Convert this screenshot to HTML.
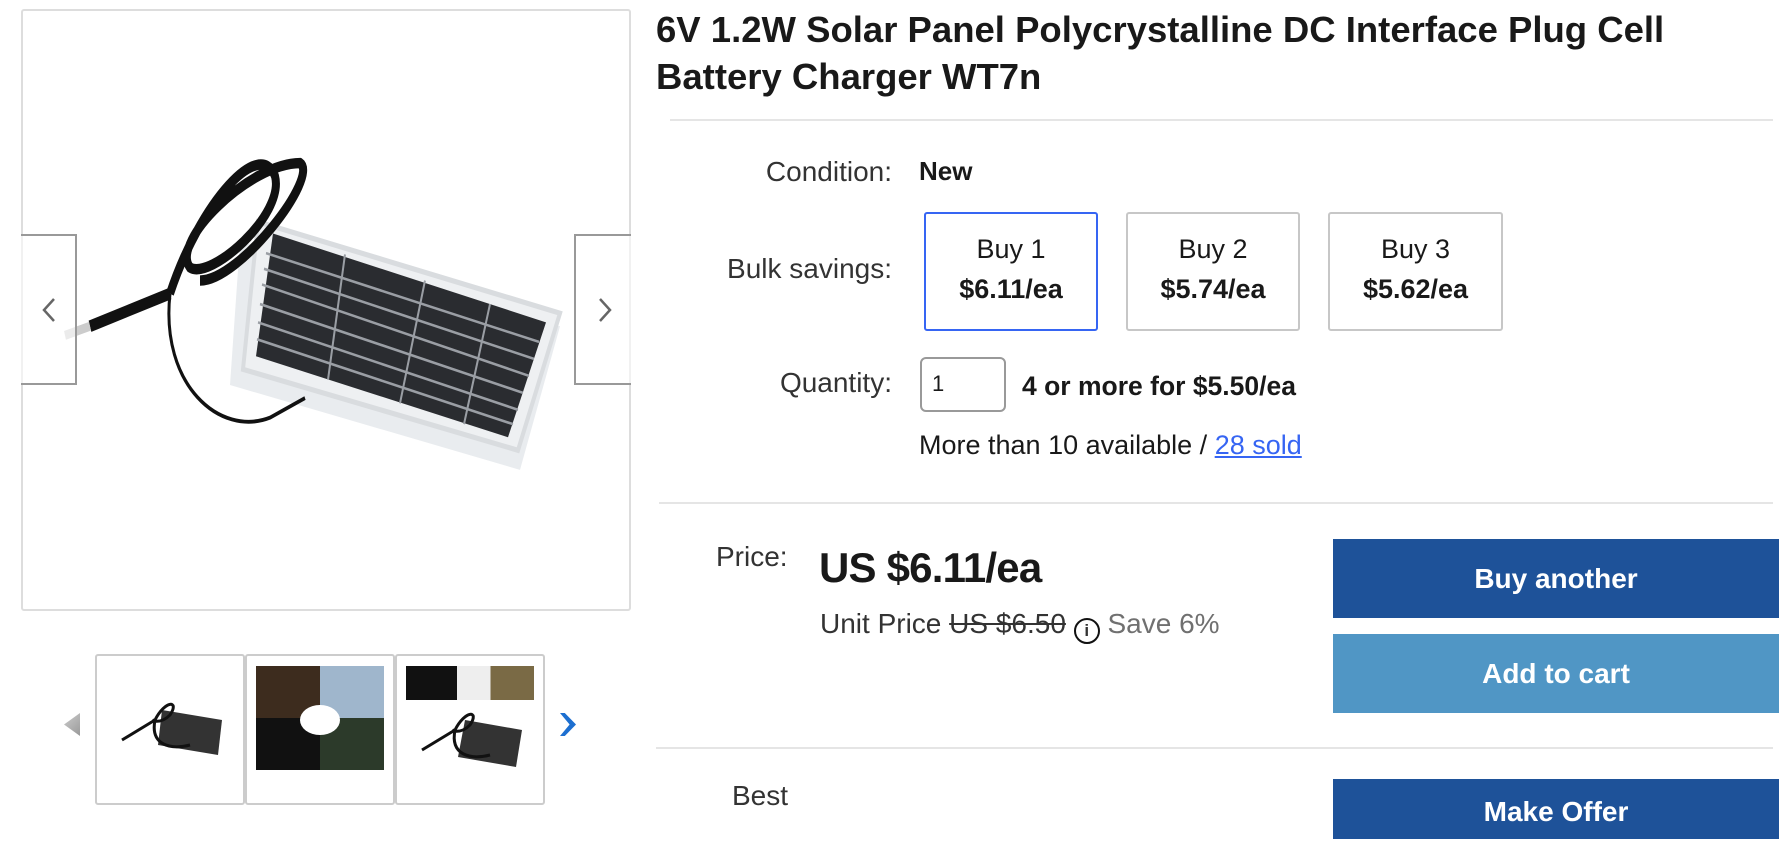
<!DOCTYPE html>
<html><head><meta charset="utf-8"><style>
*{margin:0;padding:0;box-sizing:border-box}
body{width:1790px;height:822px;overflow:hidden;background:#fff;font-family:"Liberation Sans",Arial,sans-serif;color:#191919;position:relative}
.a{position:absolute;white-space:nowrap}
.box{position:absolute;border:1px solid #c7c7c7;border-radius:3px;background:#fff}
.bulk{position:absolute;border:2px solid #c7c7c7;border-radius:3px;text-align:center;font-size:27px;color:#191919}
.bulk.sel{border-color:#3665f3}
.bulk div{position:absolute;left:0;right:0}
.btn{position:absolute;left:1333px;width:446px;color:#fff;font-weight:bold;font-size:28px;text-align:center}
.lbl{position:absolute;right:898px;font-size:28px;color:#333;text-align:right;white-space:nowrap}
.rule{position:absolute;height:2px;background:#e5e5e5}
</style></head><body>

<div class="box" style="left:21px;top:9px;width:610px;height:602px;border-width:2px;border-color:#ddd"></div>
<svg class="a" style="left:60px;top:150px" width="540" height="470" viewBox="0 0 540 360" preserveAspectRatio="none">
 <polygon points="180,70 500,135 460,245 170,180" fill="#e9ecef"/>
 <polygon points="198,55 500,125 458,230 183,168" fill="#eef0f2" stroke="#d9dcdf" stroke-width="4"/>
 <polygon points="213,64 486,132 448,220 196,158" fill="#2a2c30"/>
 <g stroke="#9a9ea4" stroke-width="2">
  <line x1="206" y1="79" x2="479" y2="147"/><line x1="204" y1="91" x2="474" y2="160"/><line x1="202" y1="103" x2="469" y2="173"/><line x1="200" y1="118" x2="463" y2="186"/><line x1="198" y1="132" x2="458" y2="199"/><line x1="197" y1="145" x2="453" y2="210"/>
  <line x1="285" y1="80" x2="268" y2="176"/><line x1="365" y1="100" x2="340" y2="194"/><line x1="430" y1="118" x2="404" y2="210"/>
 </g>
 <path d="M110 110 C140 40 200 -10 215 20 C225 50 150 100 130 90 C110 70 190 10 240 10 C260 20 180 100 140 100" fill="none" stroke="#111" stroke-width="8"/>
 <path d="M110 110 C100 180 160 220 210 205 L245 190" fill="none" stroke="#111" stroke-width="3"/>
 <path d="M30 135 L110 110" stroke="#111" stroke-width="9"/>
 <path d="M5 142 L30 135" stroke="#ccc" stroke-width="7"/>
</svg>
<div class="a" style="left:21px;top:234px;width:56px;height:151px;border:2px solid #999;border-left:none;background:rgba(255,255,255,.6)"></div>
<svg class="a" style="left:40px;top:297px" width="18" height="26"><path d="M14 2 L4 13 L14 24" fill="none" stroke="#666" stroke-width="2.5"/></svg>
<div class="a" style="left:574px;top:234px;width:57px;height:151px;border:2px solid #999;border-right:none;background:rgba(255,255,255,.6)"></div>
<svg class="a" style="left:596px;top:297px" width="18" height="26"><path d="M4 2 L14 13 L4 24" fill="none" stroke="#666" stroke-width="2.5"/></svg>

<div class="a" style="left:64px;top:713px;width:16px;height:23px;background:linear-gradient(135deg,#ccc,#999);clip-path:polygon(0 50%,100% 0,100% 100%)"></div>
<div class="box" style="left:95px;top:654px;width:150px;height:151px;border-width:2px;border-color:#ccc"></div>
<div class="box" style="left:245px;top:654px;width:150px;height:151px;border-width:2px;border-color:#ccc"></div>
<div class="box" style="left:395px;top:654px;width:150px;height:151px;border-width:2px;border-color:#ccc"></div>
<svg class="a" style="left:110px;top:690px" width="120" height="80"><polygon points="52,20 112,30 108,65 48,55" fill="#333"/><path d="M45 30 C55 10 70 10 60 25 C50 35 40 30 45 30 M45 30 L12 50 M45 30 C40 55 60 60 80 55" stroke="#111" stroke-width="3" fill="none"/></svg>
<div class="a" style="left:256px;top:666px;width:128px;height:104px;background:linear-gradient(90deg,#3d2c1e 50%,#9fb6cc 50%)"></div>
<div class="a" style="left:256px;top:718px;width:128px;height:52px;background:linear-gradient(90deg,#111 50%,#2c3a2a 50%)"></div>
<div class="a" style="left:300px;top:705px;width:40px;height:30px;border-radius:50%;background:#fff"></div>
<div class="a" style="left:406px;top:666px;width:128px;height:34px;background:linear-gradient(90deg,#111 40%,#eee 40%,#eee 66%,#7a6a45 66%)"></div>
<svg class="a" style="left:410px;top:705px" width="120" height="80"><polygon points="55,15 112,25 106,62 48,52" fill="#333"/><path d="M45 25 C55 5 70 5 60 20 C50 30 40 25 45 25 M45 25 L12 45 M45 25 C40 50 60 55 80 50" stroke="#111" stroke-width="3" fill="none"/></svg>
<div class="a" style="left:560px;top:713px;width:16px;height:23px;background:#1d6fd0;clip-path:polygon(0 0,30% 0,100% 50%,30% 100%,0 100%,60% 50%)"></div>

<div class="a" style="left:656px;top:6px;font-size:36.5px;font-weight:bold;line-height:47px;color:#191919">6V 1.2W Solar Panel Polycrystalline DC Interface Plug Cell<br>Battery Charger WT7n</div>
<div class="rule" style="left:670px;top:119px;width:1103px"></div>

<div class="lbl" style="top:156px">Condition:</div>
<div class="a" style="left:919px;top:156px;font-size:26px;font-weight:bold">New</div>

<div class="lbl" style="top:253px">Bulk savings:</div>
<div class="bulk sel" style="left:924px;top:212px;width:174px;height:119px"><div style="top:20px">Buy 1</div><div style="top:60px;font-weight:bold">$6.11/ea</div></div>
<div class="bulk" style="left:1126px;top:212px;width:174px;height:119px"><div style="top:20px">Buy 2</div><div style="top:60px;font-weight:bold">$5.74/ea</div></div>
<div class="bulk" style="left:1328px;top:212px;width:175px;height:119px"><div style="top:20px">Buy 3</div><div style="top:60px;font-weight:bold">$5.62/ea</div></div>

<div class="lbl" style="top:367px">Quantity:</div>
<div class="a" style="left:920px;top:357px;width:86px;height:55px;border:2px solid #999;border-radius:6px;font-size:22px;padding:12px 0 0 10px">1</div>
<div class="a" style="left:1022px;top:371px;font-size:26.5px;font-weight:bold">4 or more for $5.50/ea</div>
<div class="a" style="left:919px;top:430px;font-size:27px">More than 10 available / <span style="color:#3665f3;text-decoration:underline">28 sold</span></div>

<div class="rule" style="left:659px;top:502px;width:1114px"></div>

<div class="a" style="left:716px;top:541px;font-size:28px;color:#333">Price:</div>
<div class="a" style="left:819px;top:544px;font-size:42px;font-weight:bold;letter-spacing:-0.8px;color:#191919">US $6.11/ea</div>
<div class="a" style="left:820px;top:608px;font-size:28px;color:#333">Unit Price <s>US $6.50</s> <span style="display:inline-block;width:26px;height:26px;border:2.5px solid #111;border-radius:50%;font-size:17px;font-weight:bold;text-align:center;line-height:21px;vertical-align:-3px">i</span> <span style="color:#707070">Save 6%</span></div>

<div class="btn" style="top:539px;height:79px;line-height:79px;background:#1e5299">Buy another</div>
<div class="btn" style="top:634px;height:79px;line-height:79px;background:#5096c5">Add to cart</div>

<div class="rule" style="left:656px;top:747px;width:1117px"></div>
<div class="a" style="left:732px;top:780px;font-size:28px;color:#333">Best</div>
<div class="btn" style="top:779px;height:60px;line-height:66px;background:#1e5299">Make Offer</div>
</body></html>
